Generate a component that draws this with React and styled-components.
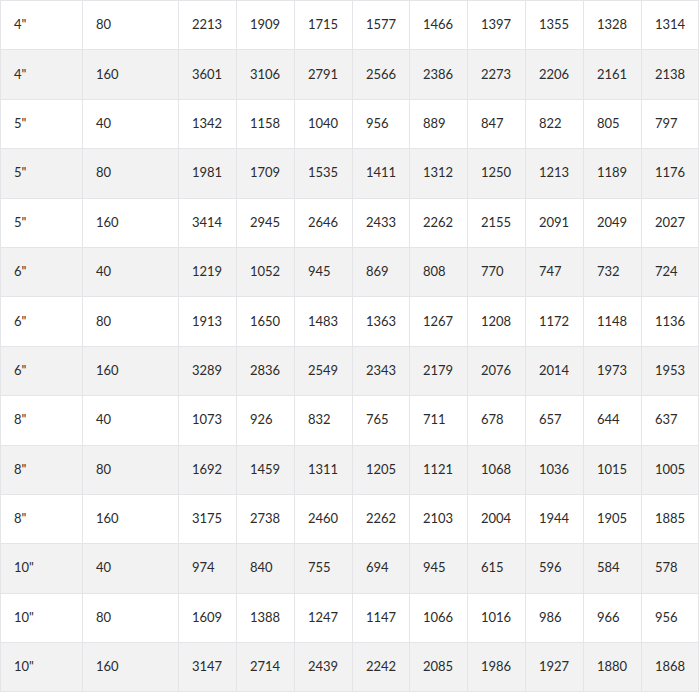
import React from 'react';
import styled, { createGlobalStyle } from 'styled-components';

const rows = [
  ['4"', '80', 2213, 1909, 1715, 1577, 1466, 1397, 1355, 1328, 1314],
  ['4"', '160', 3601, 3106, 2791, 2566, 2386, 2273, 2206, 2161, 2138],
  ['5"', '40', 1342, 1158, 1040, 956, 889, 847, 822, 805, 797],
  ['5"', '80', 1981, 1709, 1535, 1411, 1312, 1250, 1213, 1189, 1176],
  ['5"', '160', 3414, 2945, 2646, 2433, 2262, 2155, 2091, 2049, 2027],
  ['6"', '40', 1219, 1052, 945, 869, 808, 770, 747, 732, 724],
  ['6"', '80', 1913, 1650, 1483, 1363, 1267, 1208, 1172, 1148, 1136],
  ['6"', '160', 3289, 2836, 2549, 2343, 2179, 2076, 2014, 1973, 1953],
  ['8"', '40', 1073, 926, 832, 765, 711, 678, 657, 644, 637],
  ['8"', '80', 1692, 1459, 1311, 1205, 1121, 1068, 1036, 1015, 1005],
  ['8"', '160', 3175, 2738, 2460, 2262, 2103, 2004, 1944, 1905, 1885],
  ['10"', '40', 974, 840, 755, 694, 945, 615, 596, 584, 578],
  ['10"', '80', 1609, 1388, 1247, 1147, 1066, 1016, 986, 966, 956],
  ['10"', '160', 3147, 2714, 2439, 2242, 2085, 1986, 1927, 1880, 1868],
];

const colWidths = [82, 96, 58, 58, 58, 57, 58, 58, 58, 58, 57];

const GlobalStyle = createGlobalStyle`
  body {
    margin: 0;
    background: #fff;
    font-family: Lato, "Liberation Sans", sans-serif;
  }
`;

const Table = styled.table`
  border-collapse: collapse;
  table-layout: fixed;
  width: 698px;
  color: #2b2b2b;
  font-size: 13px;
`;

const Row = styled.tr`
  height: 49.4px;
  background: ${(p) => (p.$striped ? '#f2f2f2' : '#fff')};
`;

const Cell = styled.td`
  border: 1px solid #e4e5e9;
  padding: 0 0 2px 13px;
  vertical-align: middle;
  white-space: nowrap;
`;

function App() {
  return (
    <>
      <GlobalStyle />
      <Table>
        <colgroup>
          {colWidths.map((w, i) => (
            <col key={i} style={{ width: w }} />
          ))}
        </colgroup>
        <tbody>
          {rows.map((r, i) => (
            <Row key={i} $striped={i % 2 === 1}>
              {r.map((v, j) => (
                <Cell key={j}>{v}</Cell>
              ))}
            </Row>
          ))}
        </tbody>
      </Table>
    </>
  );
}

export default App;
